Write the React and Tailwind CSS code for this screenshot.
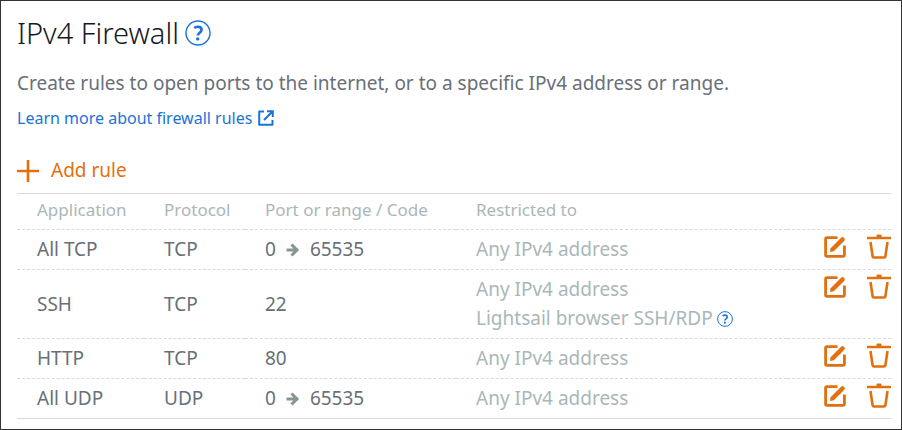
import React from "react";

const rules = [
  { application: "All TCP", protocol: "TCP", from: "0", to: "65535" },
  { application: "SSH", protocol: "TCP", from: "22", browserAccess: true },
  { application: "HTTP", protocol: "TCP", from: "80" },
  { application: "All UDP", protocol: "UDP", from: "0", to: "65535" },
];

const HelpIcon = ({ className, strokeWidth }) => (
  <svg viewBox="0 0 26 26" fill="none" stroke="currentColor" className={className} aria-hidden="true">
    <circle cx="13" cy="13" r="12" strokeWidth={strokeWidth} />
    <path d="M9.3 8c1-.9 2.100-1.300 3.500-1.300 2.400 0 3.800 1.300 3.800 3.100 0 2.900-3.800 2.900-3.800 5.800" strokeWidth="2.600" />
    <circle cx="12.700" cy="18.900" r="1.700" fill="currentColor" stroke="none" />
  </svg>
);

const ExternalIcon = () => (
  <svg viewBox="0 0 16 16" fill="none" stroke="currentColor" strokeWidth="2" className="size-4" aria-hidden="true">
    <path d="M6 1.500H1.200V14.800H14.500V10" strokeLinejoin="round" />
    <path d="M9 1.200h5.800V7M14.500 1.500L6 10" />
  </svg>
);

const PlusIcon = () => (
  <svg viewBox="0 0 22 22" stroke="currentColor" strokeWidth="2.600" className="size-[22px]" aria-hidden="true">
    <path d="M11 0v22M0 11h22" />
  </svg>
);

const ArrowIcon = () => (
  <svg viewBox="0 0 14 14" fill="none" stroke="currentColor" strokeWidth="3" className="size-3.5 text-[#879596]" aria-hidden="true">
    <path d="M0.500 7H12M5.500 1.500L11 7L5.500 12.500" />
  </svg>
);

const EditIcon = () => (
  <svg viewBox="0 0 22 22" fill="none" stroke="currentColor" className="size-[22px]" aria-hidden="true">
    <path d="M13.500 1.700H3Q1.600 1.700 1.600 3V19Q1.600 20.400 3 20.400H19Q20.400 20.400 20.400 19V9.500" strokeWidth="2.800" />
    <path d="M6 16L6.600 12.200L17.300 1.600Q18.700.500 20.200 1.900Q21.500 3.400 20.400 4.700L9.800 15.300Z" fill="currentColor" stroke="none" />
  </svg>
);

const TrashIcon = () => (
  <svg viewBox="0 0 24 25" fill="none" stroke="currentColor" className="h-[25px] w-6" aria-hidden="true">
    <path d="M0 4H24" strokeWidth="2.500" />
    <path d="M9.500 3V1.600Q9.500.500 10.500.500H13.500Q14.500.500 14.500 1.600V3Z" fill="currentColor" stroke="none" />
    <path d="M3.500 8L5.600 22.200Q5.800 23.500 7 23.500H17Q18.200 23.500 18.400 22.200L20.500 8" strokeWidth="2.600" />
  </svg>
);

const RuleRow = ({ rule, last }) => {
  const line = `border-b border-[#d5dbdb] ${last ? "border-solid" : "border-dashed"}`;
  const cell = `${line} py-[5px] pl-5`;

  return (
    <tr>
      <td className={cell}>{rule.application}</td>
      <td className={cell}>{rule.protocol}</td>
      <td className={cell}>
        <span className="flex items-center gap-2.5">
          {rule.from}
          {rule.to && (
            <>
              <ArrowIcon />
              {rule.to}
            </>
          )}
        </span>
      </td>
      <td className={`${cell} text-[#aab7b8]`}>
        <p>Any IPv4 address</p>
        {rule.browserAccess && (
          <p className="flex items-center gap-1">
            Lightsail browser SSH/RDP
            <button type="button" aria-label="About browser access" className="text-[#1a73d9]">
              <HelpIcon className="size-4" strokeWidth="1.600" />
            </button>
          </p>
        )}
      </td>
      <td className={`${line} pt-1 align-top`}>
        <div className="flex items-start justify-end gap-[21px] text-[#e2700f]">
          <button type="button" aria-label={`Edit ${rule.application} rule`} className="pt-0.5">
            <EditIcon />
          </button>
          <button type="button" aria-label={`Delete ${rule.application} rule`}>
            <TrashIcon />
          </button>
        </div>
      </td>
    </tr>
  );
};

const App = () => {
  const head = "border-y border-[#d5dbdb] [border-bottom-style:dashed] pt-0 pb-1 pl-5 text-left font-normal";

  return (
    <main className="border border-[#333] bg-white pt-3 pr-2.5 pb-2.5 pl-4 font-['Noto_Sans',sans-serif] text-[#687078]">
      <header className="flex items-center gap-1.5">
        <h1 className="text-[29px] leading-10 font-light text-[#16191f]">IPv4 Firewall</h1>
        <button type="button" aria-label="About the firewall" className="text-[#1a73d9]">
          <HelpIcon className="size-[26px]" strokeWidth="1.400" />
        </button>
      </header>

      <p className="mt-4 text-[19px] leading-[29px]">
        Create rules to open ports to the internet, or to a specific IPv4 address or range.
      </p>
      <a href="#firewall-rules" className="mt-2 flex w-fit items-center gap-1.5 text-base leading-6 text-[#1a73d9]">
        Learn more about firewall rules
        <ExternalIcon />
      </a>

      <button type="button" className="mt-[26px] mb-2 flex items-center gap-3 text-[19px] leading-[29px] text-[#e2700f]">
        <PlusIcon />
        Add rule
      </button>

      <table className="w-full table-fixed border-separate border-spacing-0 text-[19px] leading-[29px]">
        <colgroup>
          <col className="w-[127px]" />
          <col className="w-[101px]" />
          <col className="w-[211px]" />
          <col />
          <col className="w-[104px]" />
        </colgroup>
        <thead className="text-[17px] text-[#aab7b8]">
          <tr className="h-[37px]">
            <th scope="col" className={head}>Application</th>
            <th scope="col" className={head}>Protocol</th>
            <th scope="col" className={head}>Port or range / Code</th>
            <th scope="col" className={head}>Restricted to</th>
            <th scope="col" className={head} aria-label="Actions"></th>
          </tr>
        </thead>
        <tbody>
          {rules.map((rule, index) => (
            <RuleRow key={rule.application} rule={rule} last={index === rules.length - 1} />
          ))}
        </tbody>
      </table>
    </main>
  );
};

export default App;
